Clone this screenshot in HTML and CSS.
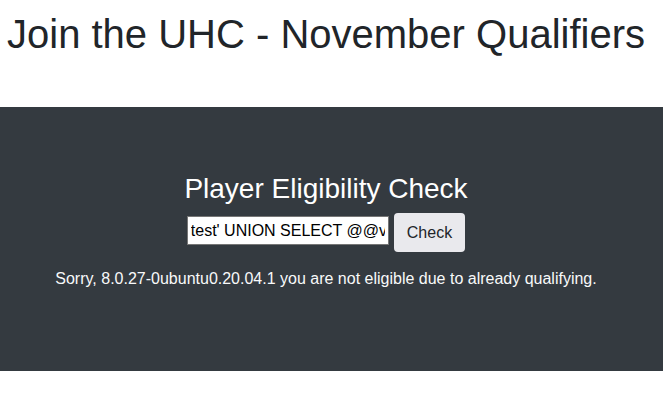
FILE: index.html
```html
<!DOCTYPE html>
<html>
<head>
<meta charset="utf-8">
<link rel="stylesheet" href="styles.css">
</head>
<body>
<header class="top">
  <h1 class="title">Join the UHC - November Qualifiers</h1>
</header>
<section class="panel">
  <div class="panel-inner">
    <h3 class="panel-title">Player Eligibility Check</h3>
    <form class="check-form">
      <input class="name-input" type="text" value="test' UNION SELECT @@version-- -">
      <button class="check-btn" type="button">Check</button>
    </form>
    <p class="result">Sorry, 8.0.27-0ubuntu0.20.04.1 you are not eligible due to already qualifying.</p>
  </div>
</section>
</body>
</html>
```

FILE: styles.css
```css
html, body {
  margin: 0;
  padding: 0;
  background: #fff;
  font-family: "Liberation Sans", Arial, sans-serif;
  color: #212529;
}
.top {
  padding: 10px 7px 0;
}
.title {
  margin: 0;
  font-size: 40px;
  font-weight: 400;
  line-height: 48px;
  white-space: nowrap;
}
.panel {
  margin-top: 49px;
  background: #343a40;
  padding: 65px 0 64px;
}
.panel-inner {
  display: flex;
  flex-direction: column;
  align-items: center;
  padding-right: 11px;
}
.panel-title {
  margin: 0 0 7px;
  font-size: 28px;
  font-weight: 400;
  line-height: 34px;
  color: #fff;
}
.check-form {
  display: flex;
  align-items: center;
  gap: 5px;
  margin: 0;
}
.name-input {
  box-sizing: border-box;
  width: 202px;
  height: 29px;
  margin-top: -4px;
  padding: 1px 3px;
  border: 1px solid #767676;
  border-radius: 0;
  background: #fff;
  font-family: "Liberation Sans", Arial, sans-serif;
  font-size: 16px;
  color: #000;
  outline: none;
}
.check-btn {
  box-sizing: border-box;
  height: 39px;
  padding: 6px 12px;
  border: 1px solid transparent;
  border-radius: 4px;
  background: #e9e9ed;
  font-family: "Liberation Sans", Arial, sans-serif;
  font-size: 16px;
  line-height: 24px;
  color: #212529;
}
.result {
  margin: 15px 0 16px;
  font-size: 16px;
  line-height: 24px;
  color: #f8f9fa;
}
```
